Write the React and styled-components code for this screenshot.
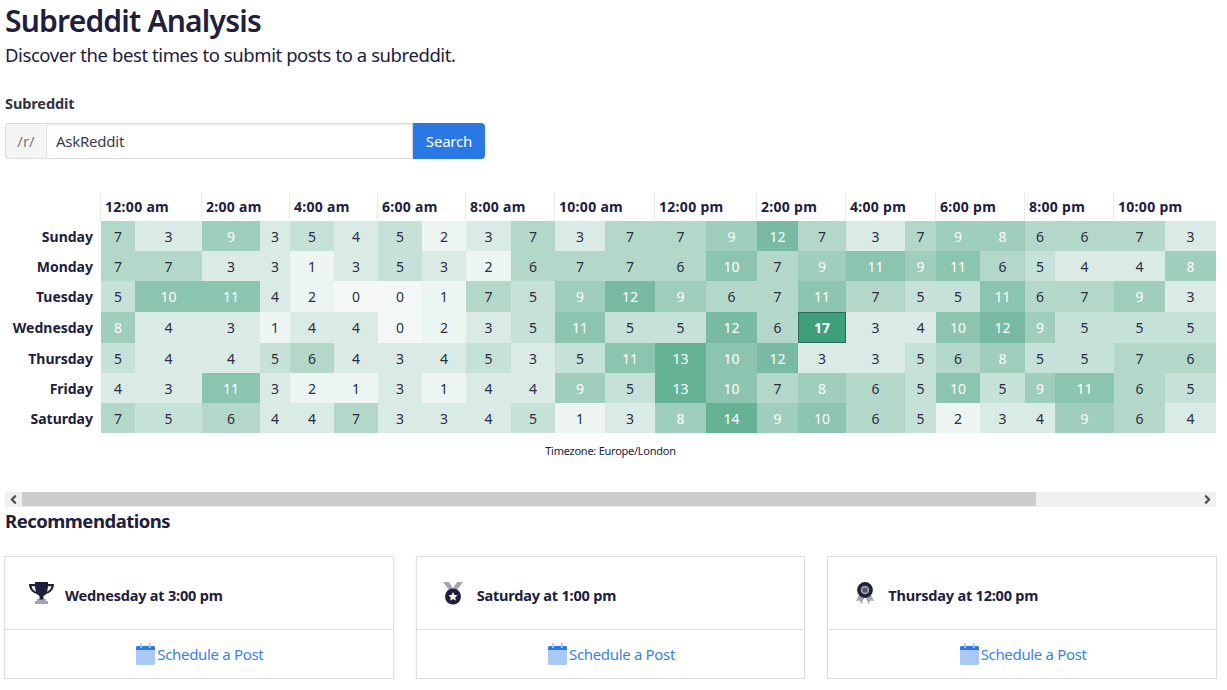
import { Fragment } from 'react';
import styled, { createGlobalStyle } from 'styled-components';
import { ChevronLeft, ChevronRight } from 'lucide-react';

const ink = '#21203c';
const blue = '#2a78e4';
const font = '"Noto Sans", "Liberation Sans", sans-serif';

const GlobalStyle = createGlobalStyle`
  html, body {
    margin: 0;
    padding: 0;
    background: #fff;
    color: ${ink};
    font-family: ${font};
  }
`;

const Page = styled.main`
  padding: 0 11px 0 5px;
  width: 1211px;
  overflow: hidden;
`;

const Title = styled.h1`
  margin: 0;
  font-size: 30px;
  line-height: 41px;
  font-weight: 600;
  letter-spacing: -0.8px;
`;

const Subtitle = styled.p`
  margin: 0 0 24px;
  font-size: 18.5px;
  line-height: 28px;
  letter-spacing: -0.42px;
`;

const Label = styled.label`
  display: block;
  margin-bottom: 10px;
  font-size: 14.5px;
  line-height: 20px;
  font-weight: 700;
  color: #33323f;
  letter-spacing: -0.1px;
`;

const SearchGroup = styled.div`
  display: flex;
  width: 480px;
  height: 36px;
  margin-bottom: 33px;
`;

const Prefix = styled.span`
  display: flex;
  align-items: center;
  justify-content: center;
  width: 42px;
  box-sizing: border-box;
  background: #f5f5f5;
  border: 1px solid #dbdbdb;
  border-right: 1px solid #e4e4e4;
  border-radius: 4px 0 0 4px;
  color: #7a7a7a;
  font-size: 15px;
`;

const SearchInput = styled.input`
  flex: 1;
  min-width: 0;
  box-sizing: border-box;
  padding: 0 9px;
  border: 1px solid #dbdbdb;
  border-left: 0;
  box-shadow: inset 0 1px 2px rgba(10, 10, 10, 0.1);
  color: #3b3a4a;
  font: 15px ${font};
  letter-spacing: -0.25px;
  outline: none;
`;

const SearchButton = styled.button`
  width: 72px;
  border: 0;
  border-radius: 0 4px 4px 0;
  background: ${blue};
  color: #fff;
  font: 15px ${font};
  letter-spacing: -0.2px;
`;

const Heatmap = styled.div`
  display: grid;
  grid-template-columns: 96px 34px 67px 58px 30px 44px 44px 44px 44px 45px 44px 50px 50px 51px 51px 41px 48px 59px 31px 44px 45px 30px 59px 51px 51px;
  grid-template-rows: 29px 30px 30px 31px 31px 30px 30px 30px;
`;

const Corner = styled.div``;

const HourCell = styled.div`
  grid-column: span 2;
  box-sizing: border-box;
  margin-left: -1px;
  padding: 5px 0 0 4px;
  border-left: 1px solid #ececec;
  font-size: 14px;
  line-height: 20px;
  font-weight: 700;
  letter-spacing: 0.3px;
  white-space: nowrap;

  &:last-of-type {
    border-right: 1px solid #ececec;
  }
`;

const DayCell = styled.div`
  display: flex;
  align-items: center;
  justify-content: flex-end;
  padding-right: 8px;
  font-size: 14px;
  font-weight: 700;
`;

const ValueCell = styled.div`
  display: flex;
  align-items: center;
  justify-content: center;
  box-sizing: border-box;
  background: ${(p) => p.$bg};
  color: ${(p) => (p.$light ? '#fff' : '#2d2c44')};
  font-size: 14px;
  font-weight: ${(p) => (p.$best ? 700 : 400)};
  border: ${(p) => (p.$best ? '1px solid #2a6b5c' : '0')};
`;

const Timezone = styled.p`
  margin: 10px 0 33px;
  font-size: 11px;
  line-height: 16px;
  text-align: center;
  letter-spacing: -0.25px;
`;

const ScrollTrack = styled.div`
  display: flex;
  height: 15px;
  background: #f0f0f0;
`;

const ScrollButton = styled.span`
  display: flex;
  flex: none;
  width: 17px;
  align-items: center;
  justify-content: center;
  color: #505050;
`;

const ScrollThumb = styled.div`
  width: 1014px;
  height: 14px;
  background: #cdcdcd;
`;

const ScrollRest = styled.div`
  flex: 1;
`;

const Heading = styled.h2`
  margin: 1px 0 22px;
  font-size: 18.5px;
  line-height: 26px;
  font-weight: 700;
  letter-spacing: -0.5px;
`;

const CardGrid = styled.section`
  display: grid;
  width: 1213px;
  margin-left: -1px;
  grid-template-columns: repeat(3, 1fr);
  column-gap: 22px;
`;

const Card = styled.article`
  height: 123px;
  box-sizing: border-box;
  border: 1px solid #dedede;
  box-shadow: 0 2px 3px rgba(10, 10, 10, 0.07);
  display: flex;
  flex-direction: column;
`;

const CardBody = styled.div`
  height: 68px;
  display: flex;
  align-items: center;
  gap: 11px;
  padding: 4px 0 0 24px;
  border-bottom: 1px solid #dedede;
  font-size: 14.5px;
  font-weight: 700;
  letter-spacing: -0.2px;
`;

const IconSlot = styled.span`
  display: flex;
  width: 25px;
  justify-content: center;
  margin-top: -4px;
`;

const CardLink = styled.a`
  flex: 1;
  display: flex;
  align-items: center;
  justify-content: center;
  gap: 2px;
  padding-left: 2px;
  color: #3a82e8;
  font-size: 15px;
  letter-spacing: -0.33px;
  text-decoration: none;
`;

function Trophy() {
  return (
    <svg width="25" height="22" viewBox="0 0 25 22">
      <path d="M8 17h9v2.500H8z" fill="#a5a4b1" />
      <path d="M6 19h13v3H6z" fill="#a5a4b1" />
      <path d="M6 0h13c0 1 0 1.500 0 2h6c0 5-3 8.500-7.500 9.800-1 1-2 1.700-3 2.200v3.500h-4V14c-1-.5-2-1.200-3-2.200C3 10.500 0 7 0 2h6zM2.600 4.300c.4 2.600 2 4.400 4.400 5.500-.5-1.500-.9-3.300-1-5.500zm19.800 0H19c-.1 2.200-.5 4-1 5.500 2.400-1.100 4-2.900 4.400-5.500z" fill={ink} />
    </svg>
  );
}

function Medal() {
  return (
    <svg width="22" height="23" viewBox="0 0 22 23">
      <path d="M1 0h6l5 8h-5zM21 0h-6l-5 8h5z" fill="#a5a4b1" />
      <circle cx="11" cy="14.500" r="8" fill={ink} />
      <path d="M11 10l1.400 2.900 3.100.4-2.300 2.200.6 3.100-2.800-1.500-2.800 1.500.6-3.100-2.300-2.200 3.100-.4z" fill="#fff" />
    </svg>
  );
}

function Award() {
  return (
    <svg width="18" height="22" viewBox="0 0 18 22">
      <path d="M4 11L0 19l3.500-.5L5.500 22 9 14l3.500 8 2-3.500 3.500.5-4-8z" fill="#a5a4b1" />
      <circle cx="9" cy="8" r="7.900" fill={ink} />
      <circle cx="9" cy="8" r="4.300" fill="#a5a4b1" />
      <circle cx="9" cy="8" r="2.600" fill="#55556e" />
    </svg>
  );
}

function CalendarIcon() {
  return (
    <svg width="19" height="22" viewBox="0 0 20 22" preserveAspectRatio="none">
      <path d="M0 7h20v13.500a1.500 1.500 0 0 1-1.500 1.500h-17A1.500 1.500 0 0 1 0 20.500z" fill="#a9c9f4" />
      <path d="M1.500 3h17A1.500 1.500 0 0 1 20 4.500V7H0V4.500A1.500 1.500 0 0 1 1.500 3z" fill={blue} />
      <path d="M4.500 0h2v5h-2zM13.500 0h2v5h-2z" fill="#a9c9f4" />
    </svg>
  );
}

const hours = ['12:00 am', '2:00 am', '4:00 am', '6:00 am', '8:00 am', '10:00 am', '12:00 pm', '2:00 pm', '4:00 pm', '6:00 pm', '8:00 pm', '10:00 pm'];

const days = [
  ['Sunday', [7, 3, 9, 3, 5, 4, 5, 2, 3, 7, 3, 7, 7, 9, 12, 7, 3, 7, 9, 8, 6, 6, 7, 3]],
  ['Monday', [7, 7, 3, 3, 1, 3, 5, 3, 2, 6, 7, 7, 6, 10, 7, 9, 11, 9, 11, 6, 5, 4, 4, 8]],
  ['Tuesday', [5, 10, 11, 4, 2, 0, 0, 1, 7, 5, 9, 12, 9, 6, 7, 11, 7, 5, 5, 11, 6, 7, 9, 3]],
  ['Wednesday', [8, 4, 3, 1, 4, 4, 0, 2, 3, 5, 11, 5, 5, 12, 6, 17, 3, 4, 10, 12, 9, 5, 5, 5]],
  ['Thursday', [5, 4, 4, 5, 6, 4, 3, 4, 5, 3, 5, 11, 13, 10, 12, 3, 3, 5, 6, 8, 5, 5, 7, 6]],
  ['Friday', [4, 3, 11, 3, 2, 1, 3, 1, 4, 4, 9, 5, 13, 10, 7, 8, 6, 5, 10, 5, 9, 11, 6, 5]],
  ['Saturday', [7, 5, 6, 4, 4, 7, 3, 3, 4, 5, 1, 3, 8, 14, 9, 10, 6, 5, 2, 3, 4, 9, 6, 4]],
];

const shades = {
  0: '#f4f9f7', 1: '#ecf5f1', 2: '#ecf5f1', 3: '#d9ebe4', 4: '#d9ebe4', 5: '#c6e1d7', 6: '#b3d8ca', 7: '#b3d8ca',
  8: '#a0cebc', 9: '#a0cebc', 10: '#8cc5af', 11: '#8cc5af', 12: '#79bba2', 13: '#66b295', 14: '#66b295', 17: '#3f9f7b',
};

const recommendations = [
  { when: 'Wednesday at 3:00 pm', Icon: Trophy },
  { when: 'Saturday at 1:00 pm', Icon: Medal },
  { when: 'Thursday at 12:00 pm', Icon: Award },
];

export default function App() {
  return (
    <Page>
      <GlobalStyle />
      <Title>Subreddit Analysis</Title>
      <Subtitle>Discover the best times to submit posts to a subreddit.</Subtitle>
      <Label htmlFor="subreddit">Subreddit</Label>
      <SearchGroup>
        <Prefix>/r/</Prefix>
        <SearchInput id="subreddit" defaultValue="AskReddit" />
        <SearchButton>Search</SearchButton>
      </SearchGroup>
      <Heatmap>
        <Corner />
        {hours.map((hour) => (
          <HourCell key={hour}>{hour}</HourCell>
        ))}
        {days.map(([day, values]) => (
          <Fragment key={day}>
            <DayCell>{day}</DayCell>
            {values.map((value, i) => (
              <ValueCell key={i} $bg={shades[value]} $light={value >= 8} $best={value === 17}>
                {value}
              </ValueCell>
            ))}
          </Fragment>
        ))}
      </Heatmap>
      <Timezone>Timezone: Europe/London</Timezone>
      <ScrollTrack>
        <ScrollButton>
          <ChevronLeft size={13} strokeWidth={4.5} />
        </ScrollButton>
        <ScrollThumb />
        <ScrollRest />
        <ScrollButton>
          <ChevronRight size={13} strokeWidth={4.5} />
        </ScrollButton>
      </ScrollTrack>
      <Heading>Recommendations</Heading>
      <CardGrid>
        {recommendations.map(({ when, Icon }) => (
          <Card key={when}>
            <CardBody>
              <IconSlot>
                <Icon />
              </IconSlot>
              {when}
            </CardBody>
            <CardLink href="#">
              <CalendarIcon />
              Schedule a Post
            </CardLink>
          </Card>
        ))}
      </CardGrid>
    </Page>
  );
}
